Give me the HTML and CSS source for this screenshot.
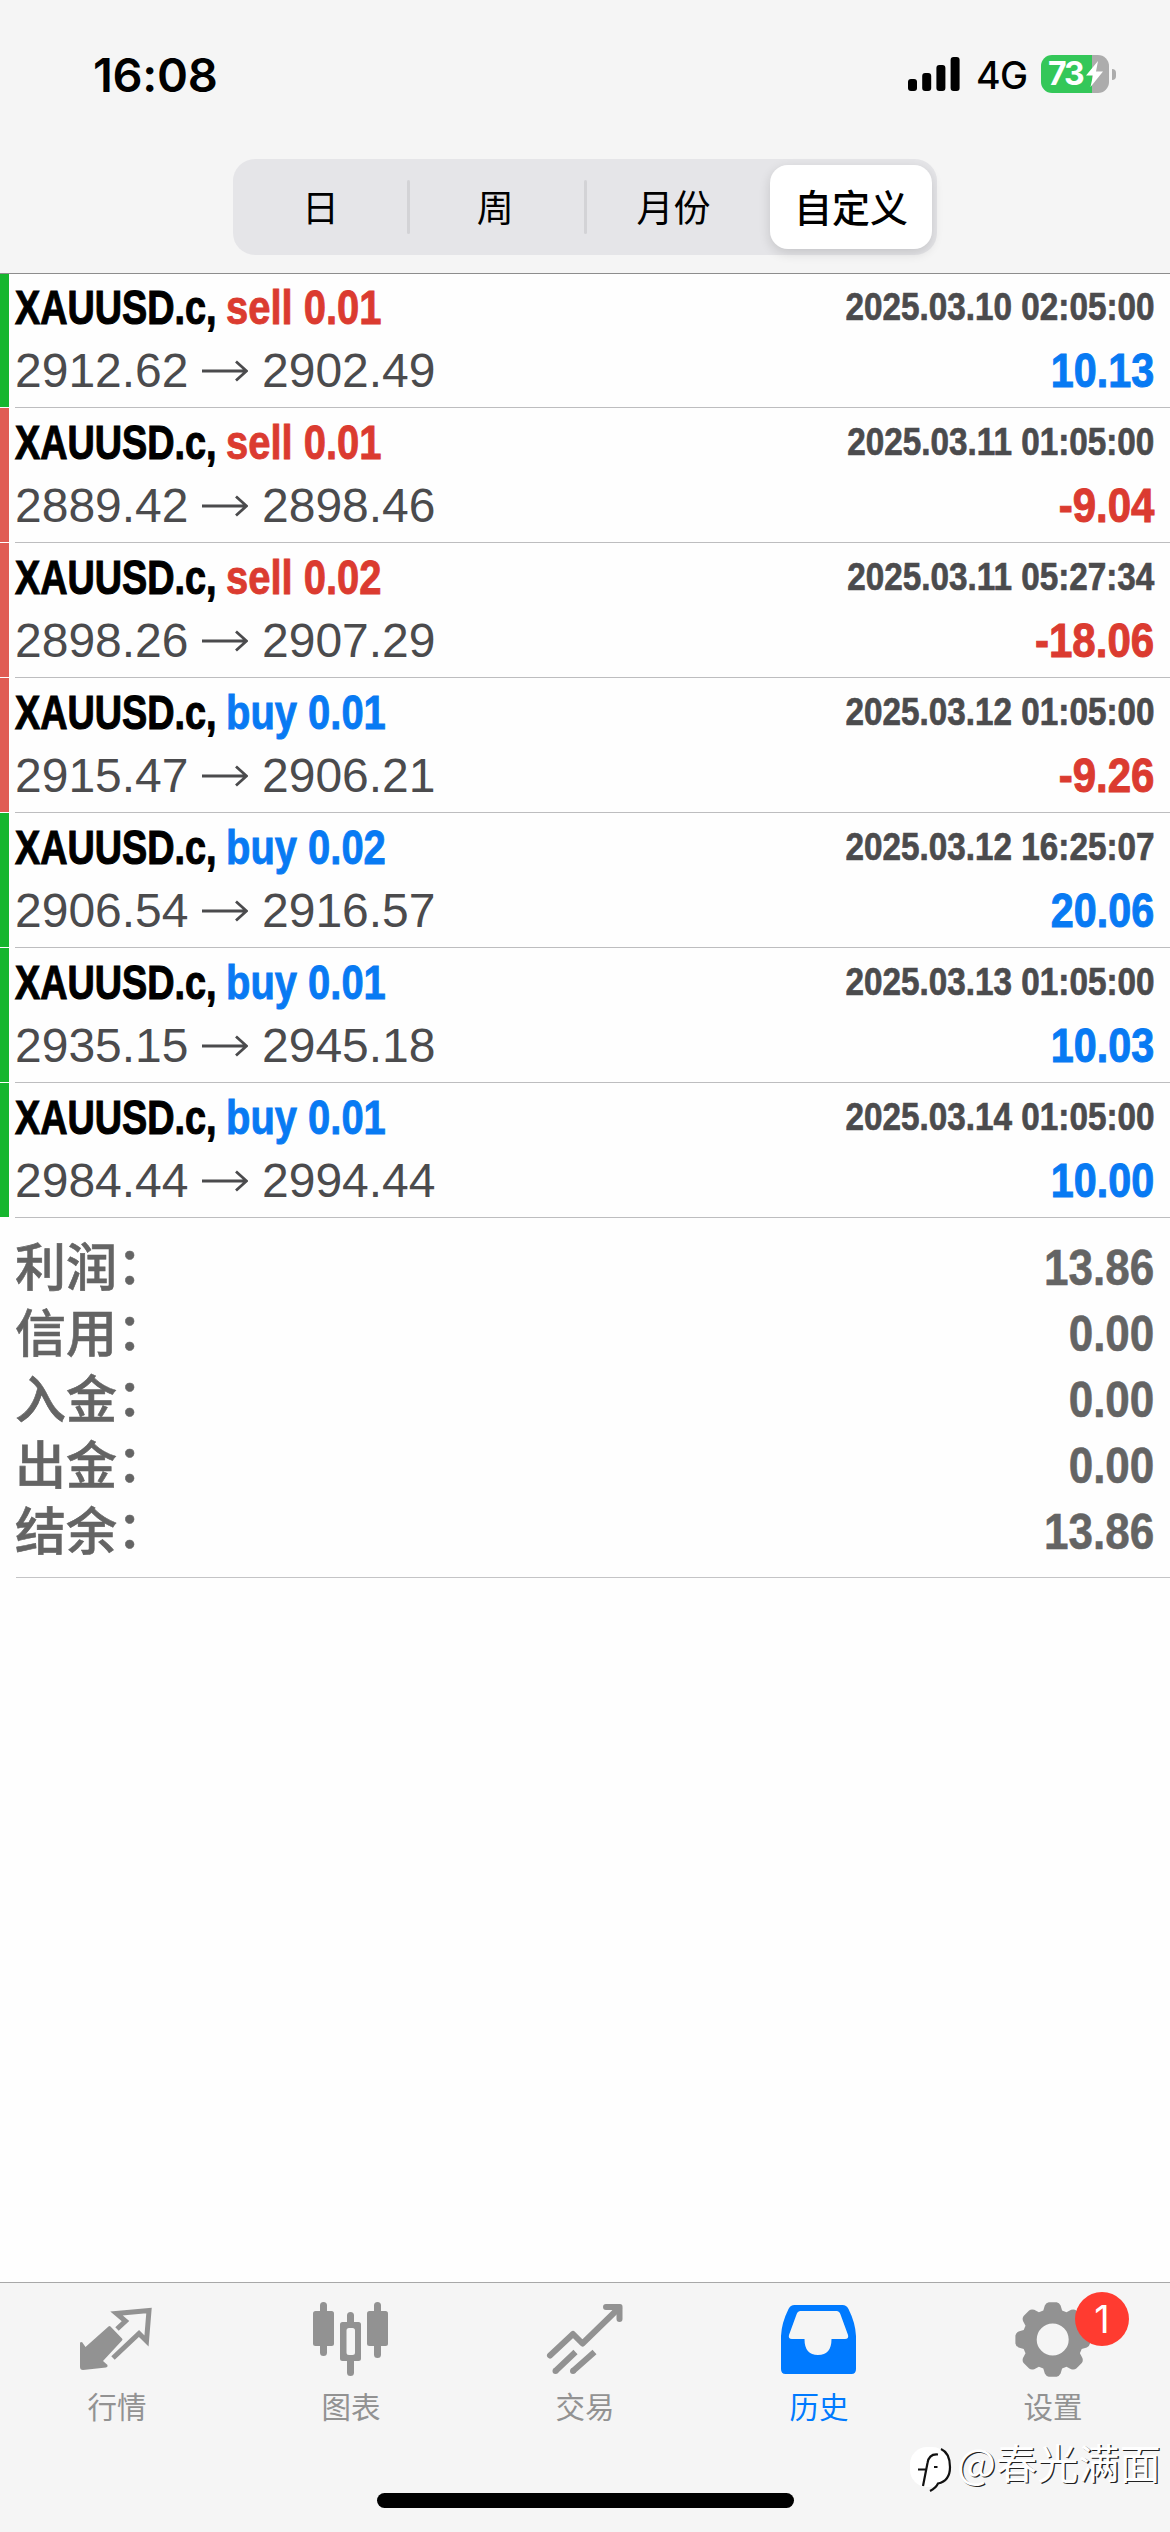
FILE: index.html
```html
<!DOCTYPE html>
<html lang="zh-CN">
<head>
<meta charset="utf-8">
<title>历史</title>
<link rel="stylesheet" href="styles.css">
</head>
<body>
<div class="screen">
  <header class="header">
    <div class="status">
      <span class="clock">16:08</span>
      <div class="status-right">
        <svg class="signal" width="52" height="34" viewBox="0 0 52 34"><rect x="0" y="22" width="9" height="12" rx="3"/><rect x="14.200" y="16" width="9" height="18" rx="3"/><rect x="28.400" y="8" width="9" height="26" rx="3"/><rect x="42.600" y="0" width="9" height="34" rx="3"/></svg>
        <span class="network">4G</span>
        <div class="battery">
          <span class="battery-level">73</span>
          <svg class="bolt" width="17" height="26" viewBox="0 0 17 26"><path d="M12 0 0 14.500h7L4.500 26 17 10.500h-7z"/></svg>
          <span class="battery-cap"></span>
        </div>
      </div>
    </div>
    <nav class="segments">
      <span class="segment">日</span>
      <span class="segment divided">周</span>
      <span class="segment divided">月份</span>
      <span class="segment selected">自定义</span>
    </nav>
  </header>

  <main class="content">
    <ul class="deals" id="deals"></ul>
    <dl class="summary">
      <div class="sum-row"><dt>利润<i>：</i></dt><dd>13.86</dd></div>
      <div class="sum-row"><dt>信用<i>：</i></dt><dd>0.00</dd></div>
      <div class="sum-row"><dt>入金<i>：</i></dt><dd>0.00</dd></div>
      <div class="sum-row"><dt>出金<i>：</i></dt><dd>0.00</dd></div>
      <div class="sum-row"><dt>结余<i>：</i></dt><dd>13.86</dd></div>
    </dl>
  </main>

  <footer class="footer">
    <nav class="tabs">
      <a class="tab">
        <svg width="80" height="80" viewBox="0 0 80 80"><path d="M31.500 24.500q1-1 2 0L45 36.500q1 1 0 2L26 59l4.500 4q.5 2-1.500 2.500L6 68q-3 0-3-3V40.500l2-.5 3.500 5z"/><path class="line" d="M40 27 48.500 19 39.500 11.500 72 8.500 69.500 39 62 31.500 36 56"/></svg>
        <span>行情</span>
      </a>
      <a class="tab">
        <svg width="80" height="80" viewBox="0 0 80 80"><rect x="2" y="9" width="21" height="35" rx="2.500"/><rect x="56" y="9" width="21" height="35" rx="2.500"/><path class="wick" d="M12.500 3.500V50.500M66.500 3.500V52.500M39.500 13.500V22M39.500 58V70.500"/><path fill-rule="evenodd" d="M31.500 20h16q2.500 0 2.500 2.500v34q0 2.500-2.500 2.500h-16q-2.500 0-2.500-2.500v-34q0-2.500 2.500-2.500zM38 26q-2.500 0-2.500 2.500v22q0 2.500 2.500 2.500h3.500q2.500 0 2.500-2.500v-22q0-2.500-2.500-2.500z"/></svg>
        <span>图表</span>
      </a>
      <a class="tab">
        <svg width="80" height="80" viewBox="0 0 80 80"><path class="trend" d="M5 53.500 28 32 37.500 41.500 74 6"/><path class="trend butt" d="M10.500 69 30.500 50M28 69 49.500 50"/><path d="M61 2H75q2.500 0 2.500 2.500V17a3 3 0 0 1-6 0V12L67 8H61a3 3 0 0 1 0-6z"/><circle cx="10.500" cy="69" r="3"/><circle cx="28" cy="69" r="3"/></svg>
        <span>交易</span>
      </a>
      <a class="tab active">
        <svg width="80" height="80" viewBox="0 0 80 80"><path transform="translate(-1.500 1)" fill-rule="evenodd" d="M17 2h48q4 0 6 4 7 14 7.500 27v33q0 5-4.500 5H8q-4.500 0-4.500-5V33Q4 20 11 6q2-4 6-4zM23 8q-3 0-4 3.500L11.500 32q-1 4 3 4H27q0 16 13.500 16T54 36h13.500q4 0 3-4L63 11.500Q62 8 59 8z"/></svg>
        <span>历史</span>
      </a>
      <a class="tab">
        <div class="icon-box">
          <svg width="80" height="80" viewBox="0 0 80 80"><path id="gear" fill-rule="evenodd" d=""/></svg>
          <b class="badge">1</b>
        </div>
        <span>设置</span>
      </a>
    </nav>
    <div class="home"></div>
    <div class="watermark">
      <svg width="48" height="48" viewBox="0 0 48 48"><rect x="1" y="1" width="39" height="40" rx="17" fill="#fff"/><path d="M32 3Q41 7 41 21 41 35 29 37.500 27 42 21 45" fill="none" stroke="#111" stroke-width="2.200"/><path d="M29 8.500Q20 7.500 18.500 17L14 40M9 23.500h7.500M25 21h3.500" fill="none" stroke="#111" stroke-width="2.200"/></svg>
      <span>@春光满面</span>
    </div>
  </footer>
</div>
<script src="app.js"></script>
</body>
</html>
```

FILE: styles.css
```css
* { box-sizing: border-box; margin: 0; padding: 0; }
body { width: 1170px; background: #fefefe; font-family: "Liberation Sans", "Noto Sans CJK SC", sans-serif; }
.screen { display: flex; flex-direction: column; height: 2532px; overflow: hidden; }

.header { position: relative; z-index: 1; height: 273px; background: #f5f5f5; box-shadow: 0 1px #8d8d8d; }
.status { display: flex; justify-content: space-between; align-items: center; height: 159px; padding: 0 61px 10px 93px; }
.clock { font: 600 47px/60px Inter, sans-serif; letter-spacing: -0.300px; }
.status-right { display: flex; align-items: center; }
.signal { margin-top: -2px; }
.network { width: 50px; margin: 2px 15px 0 16px; font: 500 37.500px/44px Inter, sans-serif; letter-spacing: -0.500px; white-space: nowrap; }
.battery { display: flex; align-items: center; position: relative; width: 68px; height: 38px; margin-top: -1px; padding-left: 7px; border-radius: 11px; background: linear-gradient(90deg, #34c759 51px, #acacac 51px); }
.battery-level { width: 38px; color: #fff; font: 700 32px/38px Inter, sans-serif; letter-spacing: -2px; }
.bolt { fill: #fff; }
.battery-cap { position: absolute; right: -7px; top: 14px; width: 4px; height: 11px; border-radius: 0 5px 5px 0; background: #acacac; }

.segments { display: flex; width: 704px; height: 96px; margin: 0 auto; padding: 6px 5px; border-radius: 22px; background: #e5e5e8; }
.segment { position: relative; flex: 0 0 176.500px; display: flex; align-items: center; justify-content: center; font: 400 37px/82px "Noto Sans CJK SC", sans-serif; padding-bottom: 2px; }
.segment:first-child { flex-basis: 169px; padding-right: 4px; }
.segment:nth-child(3) { flex-basis: 180px; }
.segment.divided::before { content: ""; position: absolute; left: 0; top: 15px; width: 3px; height: 54px; border-radius: 2px; background: #d3d3d6; }
.segment.selected { flex-basis: 162px; margin-left: auto; white-space: nowrap; border-radius: 18px; background: #fff; font-weight: 500; font-size: 38px; box-shadow: 0 4px 12px rgba(0,0,0,.14); }

.content { flex: 1; }
.deals { list-style: none; }
.deal { --bar: #16b62e; display: flex; flex-direction: column; height: 135px; padding: 0 16px 0 15px; background: linear-gradient(var(--bar), var(--bar)) 0 0 / 9px 134px no-repeat, linear-gradient(#bdbdbf, #bdbdbf) 15px 134px / 100% 1px no-repeat; }
.deal.loss { --bar: #e05c54; }
.deal-top, .deal-bottom { display: flex; justify-content: space-between; color: #4b4b4d; }
.deal-top { height: 68px; }
.deal-bottom { height: 60px; }
.name { display: flex; font-weight: 700; font-size: 48px; line-height: 69px; white-space: pre; }
.symbol { width: 211px; color: #000; transform: scaleX(.787); transform-origin: left; -webkit-text-stroke: 1.100px; }
.side { transform: scaleX(.832); transform-origin: left; -webkit-text-stroke: .9px; color: #db3b30; }
.side.buy { color: #087af3; }
.time { font-weight: 700; font-size: 38.500px; line-height: 68px; transform: scaleX(.864); transform-origin: right; -webkit-text-stroke: .7px; }
.prices { display: flex; align-items: center; font-size: 48px; line-height: 60px; }
.prices span { width: 187px; }
.prices svg { width: 46px; margin-right: 14px; fill: none; stroke: #4b4b4d; stroke-width: 2.800px; }
.profit { font-weight: 700; font-size: 48px; line-height: 60px; color: #087af3; transform: scaleX(.86); transform-origin: right; -webkit-text-stroke: 1px; }
.loss .profit { color: #db3b30; transform: scaleX(.875); }

.summary { height: 360px; margin-left: 16px; padding: 17px 16px 0 0; border-bottom: 1px solid #c4c4c6; }
.sum-row { display: flex; justify-content: space-between; height: 66px; font-weight: 700; color: #646464; }
.sum-row dt { padding-top: 1px; margin-left: -1px; font: 500 51px/66px "Liberation Sans", "Noto Sans CJK SC", sans-serif; -webkit-text-stroke: .6px; }
.sum-row i { position: relative; top: -2px; font-style: normal; }
.sum-row dd { font-size: 50px; line-height: 66px; transform: scaleX(.88); transform-origin: right; -webkit-text-stroke: .6px; }

.footer { position: relative; height: 250px; background: #f5f5f5; border-top: 1px solid #a8a8a8; }
.tabs { display: flex; padding-top: 19px; }
.tab { flex: 1; display: flex; flex-direction: column; align-items: center; color: #929292; font: 400 29.500px/40px "Noto Sans CJK SC", sans-serif; }
.tab svg { display: block; fill: currentColor; overflow: visible; }
.tab .line { fill: none; stroke: currentColor; stroke-width: 5px; stroke-linejoin: miter; }
.tab span { margin-top: 3px; }
.wick { fill: none; stroke: currentColor; stroke-width: 7px; stroke-linecap: round; }
.trend { fill: none; stroke: currentColor; stroke-width: 6px; stroke-linecap: round; stroke-linejoin: round; }
.trend.butt { stroke-linecap: butt; }
.tab.active { color: #007aff; }
.icon-box { position: relative; }
.badge { position: absolute; left: 62px; top: -10px; width: 54px; height: 54px; border-radius: 50%; background: #ff3b30; color: #fff; font: 400 38px/54px Inter, sans-serif; text-align: center; }
.home { position: absolute; left: 377px; bottom: 24px; width: 417px; height: 15px; border-radius: 8px; background: #000; }
.watermark { position: absolute; left: 909px; bottom: 38px; display: flex; align-items: flex-start; white-space: nowrap; }
.watermark svg { margin-top: 13px; }
.watermark span { color: #fff; font: 400 41.200px/56px "Noto Sans CJK SC", sans-serif; text-shadow: 1.300px 1.300px .5px #222; }
```

FILE: app.js
```js
const deals = [
  ["sell 0.01", "2025.03.10 02:05:00", "2912.62", "2902.49", "10.13"],
  ["sell 0.01", "2025.03.11 01:05:00", "2889.42", "2898.46", "-9.04"],
  ["sell 0.02", "2025.03.11 05:27:34", "2898.26", "2907.29", "-18.06"],
  ["buy 0.01", "2025.03.12 01:05:00", "2915.47", "2906.21", "-9.26"],
  ["buy 0.02", "2025.03.12 16:25:07", "2906.54", "2916.57", "20.06"],
  ["buy 0.01", "2025.03.13 01:05:00", "2935.15", "2945.18", "10.03"],
  ["buy 0.01", "2025.03.14 01:05:00", "2984.44", "2994.44", "10.00"]
];

document.getElementById("deals").innerHTML = deals.map(([side, time, open, close, profit]) => `
  <li class="deal ${profit.startsWith("-") ? "loss" : ""}">
    <div class="deal-top">
      <div class="name"><span class="symbol">XAUUSD.c,</span><span class="side ${side.split(" ")[0]}">${side}</span></div>
      <span class="time">${time}</span>
    </div>
    <div class="deal-bottom">
      <div class="prices"><span>${open}</span><svg height="22" viewBox="0 0 46 22"><path d="M0 11H44M34 1.500 44.500 11 34 20.500"/></svg><span>${close}</span></div>
      <span class="profit">${profit}</span>
    </div>
  </li>`).join("");

// Eight rounded teeth around a ring with a round hole
const point = (r, deg) => {
  const a = deg * Math.PI / 180;
  return `${(39.7 + r * Math.cos(a)).toFixed(1)} ${(37.5 + r * Math.sin(a)).toFixed(1)}`;
};
let d = "";
for (let i = 0; i < 8; i++) {
  const c = i * 45;
  d += `${i ? "L" : "M"}${point(30.5, c - 18)}L${point(35, c - 13)}Q${point(37.5, c - 10)} ${point(37.5, c - 6)}L${point(37.5, c + 6)}Q${point(37.5, c + 10)} ${point(35, c + 13)}L${point(30.5, c + 18)}`;
}
d += "zM23.7 37.5a16 16 0 1 0 32 0a16 16 0 1 0-32 0z";
document.getElementById("gear").setAttribute("d", d);
```
